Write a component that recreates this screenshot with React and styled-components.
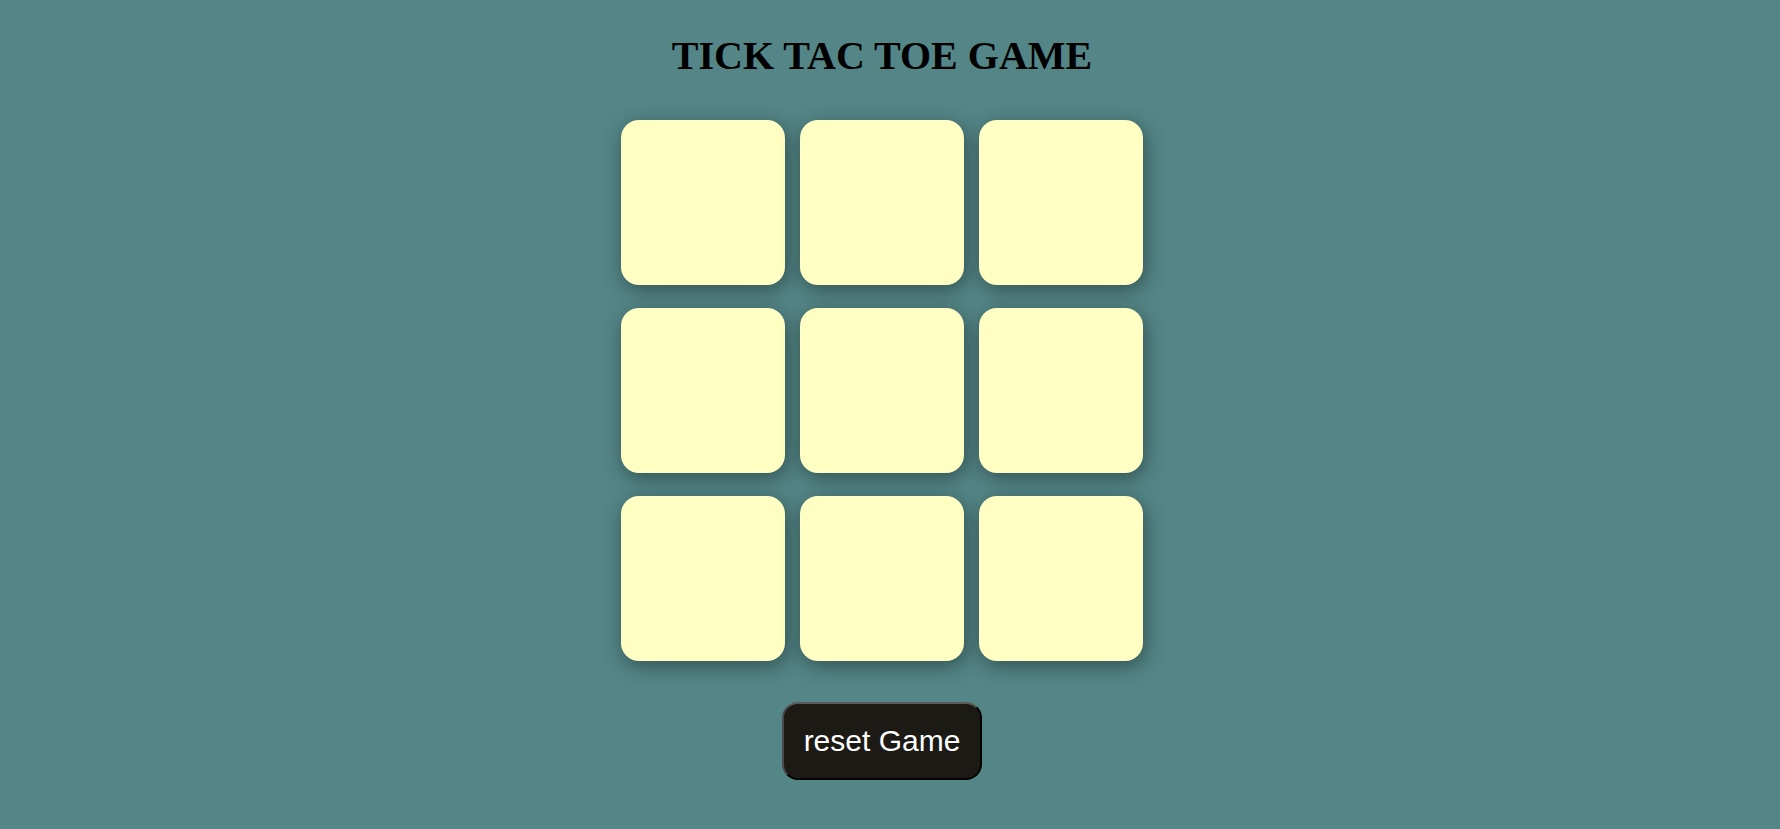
import styled, { createGlobalStyle } from "styled-components";

const Global = createGlobalStyle`
  body {
    margin: 0;
    background-color: #548687;
  }
`;

const Pagina = styled.main`
  display: flex;
  flex-direction: column;
  align-items: center;
  min-height: 100vh;
  padding: 33px 16px 0 0;
  box-sizing: border-box;
`;
const Titulo = styled.h1`
  margin: 0 0 41px 0;
  font-family: "Liberation Serif", "Times New Roman", serif;
  font-size: 40px;
  line-height: 46px;
  font-weight: 700;
  color: #000;
`;
const Tablero = styled.div`
  display: grid;
  grid-template-columns: repeat(3, 164.5px);
  grid-auto-rows: 164.5px;
  column-gap: 14.5px;
  row-gap: 23.5px;
`;
const Casilla = styled.div`
  background-color: #ffffc4;
  border-radius: 18px;
  box-shadow: 2px 5px 20px rgba(0, 0, 0, 0.4);
  cursor: pointer;
`;
const Btn = styled.button`
  margin-top: 41px;
  padding: 20px 20px;
  background-color: #1b1a14;
  color: #fff;
  font-family: "Liberation Sans", Arial, sans-serif;
  font-size: 30px;
  border-radius: 16px;
  border: 2px outset #3a3a3a;
  border-top-color: #5a5a5a;
  border-left-color: #4a4a4a;
  border-right-color: #111;
  border-bottom-color: #000;
  cursor: pointer;
`;

const casillas = Array.from({ length: 9 }, (_, i) => i);

const App = () => {
  return (
    <>
      <Global />
      <Pagina>
        <Titulo>TICK TAC TOE GAME</Titulo>

        <Tablero>
          {casillas.map((i) => (
            <Casilla key={i} />
          ))}
        </Tablero>

        <Btn type="button">reset Game</Btn>
      </Pagina>
    </>
  );
};

export default App;
